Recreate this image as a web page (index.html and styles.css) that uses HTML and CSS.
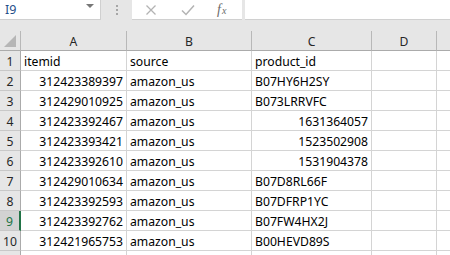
FILE: index.html
```html
<!DOCTYPE html>
<html>
<head>
<meta charset="utf-8">
<link rel="stylesheet" href="styles.css">
</head>
<body>
<div class="app">
  <div class="topbar">
    <div class="namebox">
      <span class="name">I9</span>
      <svg class="dd" width="8" height="5" viewBox="0 0 8 5"><path d="M0 0h8L4 4z" fill="#777"/></svg>
    </div>
    <div class="grip"><i></i><i></i><i></i></div>
    <div class="fbtns">
      <svg class="ico" width="12" height="12" viewBox="0 0 12 12"><path d="M1.5 1.5l9 9M10.5 1.5l-9 9" stroke="#b3b3b3" stroke-width="1.3" fill="none"/></svg>
      <svg class="ico" width="14" height="12" viewBox="0 0 14 12"><path d="M1 6.5l4 4L13 1.5" stroke="#b3b3b3" stroke-width="1.5" fill="none"/></svg>
      <span class="fx">f<sub>x</sub></span>
    </div>
    <div class="finput"></div>
  </div>
  <div class="sheet">
    <div class="hd corner"><span class="tri"></span></div>
    <div class="hd col">A</div>
    <div class="hd col">B</div>
    <div class="hd col">C</div>
    <div class="hd col">D</div>
    <div class="hd col last"></div>

    <div class="rh">1</div><div class="c">itemid</div><div class="c">source</div><div class="c">product_id</div><div class="c"></div><div class="c last"></div>
    <div class="rh">2</div><div class="c r">312423389397</div><div class="c">amazon_us</div><div class="c">B07HY6H2SY</div><div class="c"></div><div class="c last"></div>
    <div class="rh">3</div><div class="c r">312429010925</div><div class="c">amazon_us</div><div class="c">B073LRRVFC</div><div class="c"></div><div class="c last"></div>
    <div class="rh">4</div><div class="c r">312423392467</div><div class="c">amazon_us</div><div class="c r">1631364057</div><div class="c"></div><div class="c last"></div>
    <div class="rh">5</div><div class="c r">312423393421</div><div class="c">amazon_us</div><div class="c r">1523502908</div><div class="c"></div><div class="c last"></div>
    <div class="rh">6</div><div class="c r">312423392610</div><div class="c">amazon_us</div><div class="c r">1531904378</div><div class="c"></div><div class="c last"></div>
    <div class="rh">7</div><div class="c r">312429010634</div><div class="c">amazon_us</div><div class="c">B07D8RL66F</div><div class="c"></div><div class="c last"></div>
    <div class="rh">8</div><div class="c r">312423392593</div><div class="c">amazon_us</div><div class="c">B07DFRP1YC</div><div class="c"></div><div class="c last"></div>
    <div class="rh sel">9</div><div class="c r">312423392762</div><div class="c">amazon_us</div><div class="c">B07FW4HX2J</div><div class="c"></div><div class="c last"></div>
    <div class="rh">10</div><div class="c r">312421965753</div><div class="c">amazon_us</div><div class="c">B00HEVD89S</div><div class="c"></div><div class="c last"></div>
    <div class="rh"></div><div class="c"></div><div class="c"></div><div class="c"></div><div class="c"></div><div class="c last"></div>
  </div>
</div>
</body>
</html>
```

FILE: styles.css
```css
html, body {
  margin: 0;
  padding: 0;
  background: #ffffff;
  overflow: hidden;
}
.app {
  width: 450px;
  height: 255px;
  overflow: hidden;
  font-family: "Noto Sans", "Liberation Sans", sans-serif;
}
.topbar {
  height: 31px;
  background: #e6e6e6;
  display: flex;
  align-items: flex-start;
}
.namebox {
  width: 101px;
  height: 20px;
  background: #fff;
  box-sizing: border-box;
  border-right: 1px solid #d0d0d0;
  border-bottom: 1px solid #d0d0d0;
  display: flex;
  align-items: center;
  justify-content: space-between;
  padding: 0 6px 0 5px;
}
.name {
  font-size: 12.5px;
  color: #1f4f8a;
}
.dd {
  margin-top: -6px;
}
.grip {
  width: 31px;
  height: 20px;
  display: flex;
  flex-direction: column;
  align-items: center;
  justify-content: center;
  gap: 2px;
}
.grip i {
  width: 2px;
  height: 2px;
  background: #a6a6a6;
  display: block;
}
.fbtns {
  width: 110px;
  height: 20px;
  background: #fff;
  box-sizing: border-box;
  border-bottom: 1px solid #d0d0d0;
  display: flex;
  align-items: center;
  padding-left: 13px;
  gap: 24px;
}
.fx {
  font-family: "Liberation Serif", serif;
  font-style: italic;
  font-size: 14px;
  color: #6b6b6b;
  margin-left: -2px;
  line-height: 1;
}
.fx sub {
  font-size: 10px;
  vertical-align: 0;
  margin-left: 1px;
}
.finput {
  flex: 1;
  margin-left: 3px;
  height: 20px;
  background: #fff;
  box-sizing: border-box;
  border-bottom: 1px solid #d0d0d0;
}
.sheet {
  display: grid;
  grid-template-columns: 21px 106px 125px 120px 65px 1fr;
  grid-auto-rows: 20px;
}
.sheet > div {
  box-sizing: border-box;
  font-size: 12.2px;
  line-height: 19px;
  padding-top: 1px;
  white-space: nowrap;
  overflow: hidden;
}
.hd {
  background: #e6e6e6;
  border-right: 1px solid #b8b8b8;
  border-bottom: 1px solid #ababab;
  text-align: center;
  color: #262626;
}
.hd.last {
  border-right: none;
}
.corner {
  position: relative;
}
.tri {
  position: absolute;
  right: 4px;
  bottom: 3px;
  width: 0;
  height: 0;
  border-left: 12px solid transparent;
  border-bottom: 12px solid #b6b6b6;
}
.rh {
  background: #e6e6e6;
  border-right: 1px solid #ababab;
  border-bottom: 1px solid #c8c8c8;
  text-align: center;
  color: #262626;
}
.rh.sel {
  background: #d2d2d2;
  color: #217346;
  border-right: 2px solid #217346;
}
.c {
  border-right: 1px solid #d4d4d4;
  border-bottom: 1px solid #d4d4d4;
  color: #000;
  padding-left: 3px;
  padding-right: 3px;
}
.c.r {
  text-align: right;
}
.c.last {
  border-right: none;
}
```
